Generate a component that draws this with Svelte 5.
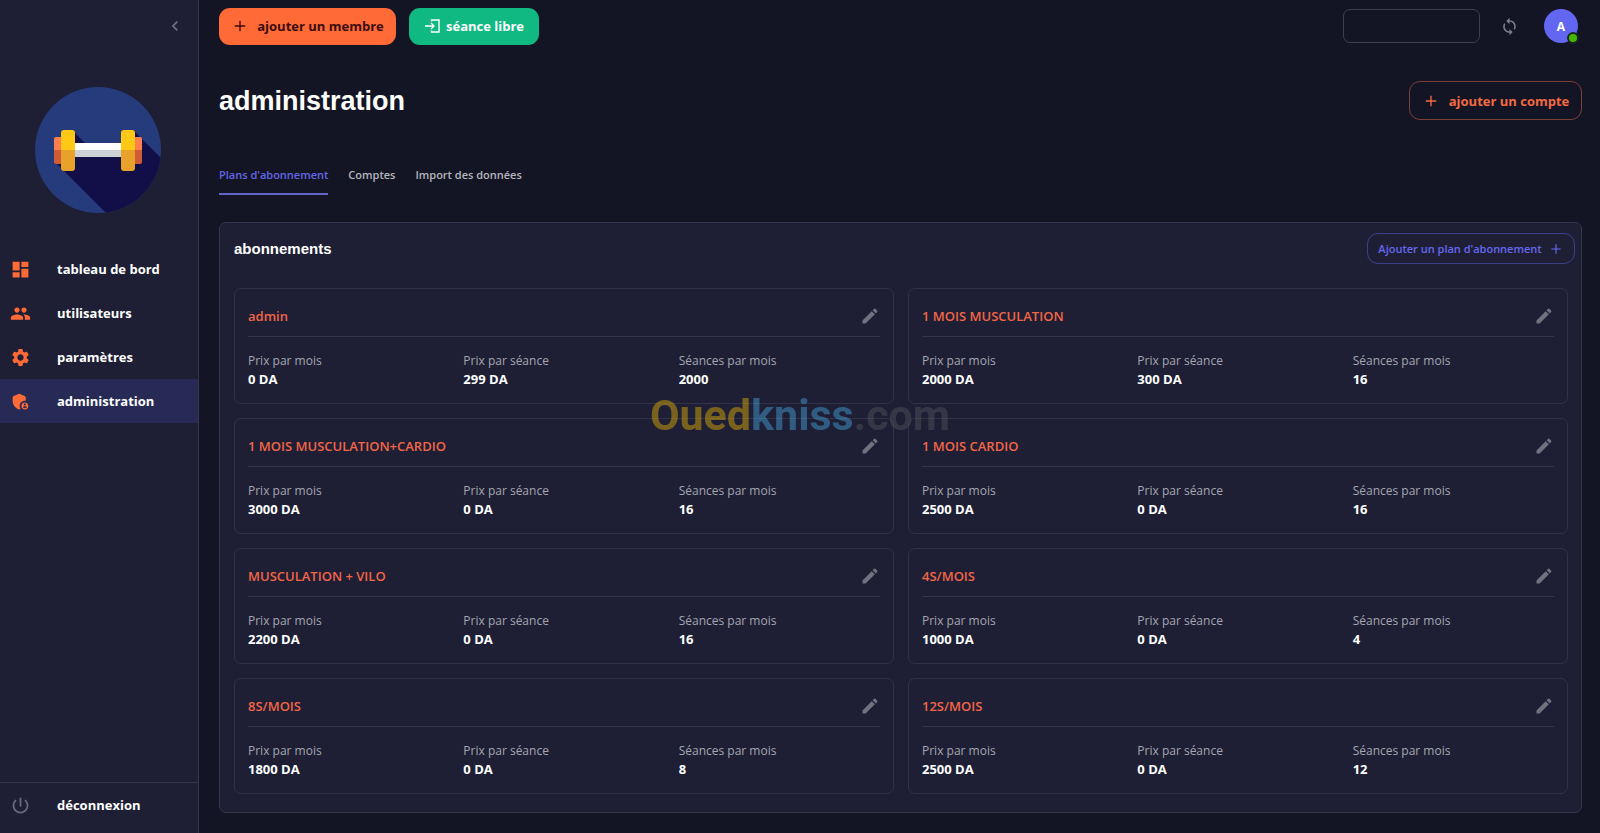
<script>
  const navItems = [
    { label: 'tableau de bord', icon: 'dashboard' },
    { label: 'utilisateurs', icon: 'group' },
    { label: 'paramètres', icon: 'settings' },
    { label: 'administration', icon: 'admin' }
  ];

  const tabs = ["Plans d'abonnement", 'Comptes', 'Import des données'];

  const plans = [
    { name: 'admin', month: 0, session: 299, count: 2000 },
    { name: '1 MOIS MUSCULATION', month: 2000, session: 300, count: 16 },
    { name: '1 MOIS MUSCULATION+CARDIO', month: 3000, session: 0, count: 16 },
    { name: '1 MOIS CARDIO', month: 2500, session: 0, count: 16 },
    { name: 'MUSCULATION + VILO', month: 2200, session: 0, count: 16 },
    { name: '4S/MOIS', month: 1000, session: 0, count: 4 },
    { name: '8S/MOIS', month: 1800, session: 0, count: 8 },
    { name: '12S/MOIS', month: 2500, session: 0, count: 12 }
  ];

  const icons = {
    dashboard: 'M3 13h8V3H3v10zm0 8h8v-6H3v6zm10 0h8V11h-8v10zm0-18v6h8V3h-8z',
    group:
      'M16 11c1.66 0 2.99-1.34 2.99-3S17.66 5 16 5s-3 1.34-3 3 1.34 3 3 3zm-8 0c1.66 0 2.99-1.34 2.99-3S9.66 5 8 5 5 6.34 5 8s1.34 3 3 3zm0 2c-2.33 0-7 1.17-7 3.5V19h14v-2.5c0-2.33-4.67-3.5-7-3.5zm8 0c-.29 0-.62.02-.97.05 1.16.84 1.97 1.97 1.97 3.45V19h6v-2.5c0-2.33-4.67-3.5-7-3.5z',
    settings:
      'M19.14 12.94c.04-.3.06-.61.06-.94 0-.32-.02-.64-.07-.94l2.03-1.58c.18-.14.23-.41.12-.61l-1.92-3.32c-.12-.22-.37-.29-.59-.22l-2.39.96c-.5-.38-1.03-.7-1.62-.94l-.36-2.54c-.04-.24-.24-.41-.48-.41h-3.84c-.24 0-.43.17-.47.41l-.36 2.54c-.59.24-1.13.57-1.62.94l-2.39-.96c-.22-.08-.47 0-.59.22L2.74 8.87c-.12.21-.08.47.12.61l2.03 1.58c-.05.3-.09.63-.09.94s.02.64.07.94l-2.03 1.58c-.18.14-.23.41-.12.61l1.92 3.32c.12.22.37.29.59.22l2.39-.96c.5.38 1.03.7 1.62.94l.36 2.54c.05.24.24.41.48.41h3.84c.24 0 .44-.17.47-.41l.36-2.54c.59-.24 1.13-.56 1.62-.94l2.39.96c.22.08.47 0 .59-.22l1.92-3.32c.12-.22.07-.47-.12-.61l-2.01-1.58zM12 15.6c-1.98 0-3.6-1.62-3.6-3.6s1.62-3.6 3.6-3.6 3.6 1.62 3.6 3.6-1.62 3.6-3.6 3.6z',
    admin:
      'M17 11c.34 0 .67.04 1 .09V7.58c0-.8-.47-1.52-1.2-1.83l-5.5-2.4c-.51-.22-1.09-.22-1.6 0l-5.5 2.4C3.47 6.06 3 6.78 3 7.58v3.6c0 4.54 3.2 8.79 7.5 9.82.55-.13 1.08-.32 1.6-.55-.69-.98-1.1-2.17-1.1-3.45 0-3.31 2.69-6 6-6zM17 13c-2.21 0-4 1.79-4 4s1.79 4 4 4 4-1.79 4-4-1.79-4-4-4zm0 1.38c.62 0 1.12.51 1.12 1.12s-.51 1.12-1.12 1.12-1.12-.51-1.12-1.12.5-1.12 1.12-1.12zm0 5.37c-.93 0-1.74-.46-2.24-1.17.05-.72 1.51-1.08 2.24-1.08s2.19.36 2.24 1.08c-.5.71-1.31 1.17-2.24 1.17z',
    power:
      'M13 3h-2v10h2V3zm4.83 2.17-1.42 1.42C17.99 7.86 19 9.81 19 12c0 3.87-3.13 7-7 7s-7-3.13-7-7c0-2.19 1.01-4.14 2.58-5.42L6.17 5.17C4.23 6.82 3 9.26 3 12c0 4.97 4.03 9 9 9s9-4.03 9-9c0-2.74-1.23-5.18-3.17-6.83z',
    edit: 'M3 17.25V21h3.75L17.81 9.94l-3.75-3.75L3 17.25zM20.71 7.04c.39-.39.39-1.02 0-1.41l-2.34-2.34c-.39-.39-1.02-.39-1.41 0l-1.83 1.83 3.75 3.75 1.83-1.83z',
    sync: 'M12 4V1L8 5l4 4V6c3.31 0 6 2.69 6 6 0 1.01-.25 1.97-.7 2.8l1.46 1.46C19.54 15.03 20 13.57 20 12c0-4.42-3.58-8-8-8zm0 14c-3.31 0-6-2.69-6-6 0-1.01.25-1.97.7-2.8L5.24 7.74C4.46 8.97 4 10.43 4 12c0 4.42 3.58 8 8 8v3l4-4-4-4v3z',
    chevron: 'M15.41 7.41 14 6l-6 6 6 6 1.41-1.41L10.83 12z',
    plus: 'M11.1 5h1.8v6.1H19v1.8h-6.1V19h-1.8v-6.1H5v-1.8h6.1z'
  };

  let activePage = $state('administration');
  let activeTab = $state(tabs[0]);
  let search = $state('');
</script>

{#snippet icon(name, size)}
  <svg width={size} height={size} viewBox="0 0 24 24" fill="currentColor" aria-hidden="true">
    <path d={icons[name]} />
  </svg>
{/snippet}

<div class="layout">
  <aside class="sidebar">
    <button class="collapse" aria-label="Réduire le menu">{@render icon('chevron', 20)}</button>

    <svg class="logo" viewBox="0 0 126 126" role="img" aria-label="Haltère">
      <defs>
        <clipPath id="disc"><circle cx="63" cy="63" r="63" /></clipPath>
      </defs>
      <g clip-path="url(#disc)">
        <rect width="126" height="126" fill="#263b7b" />
        <path d="M40 46 L50 56 H88 L99 44 L140 85 V140 H85 L22 77 Z" fill="#120e48" />
      </g>
      <rect x="38" y="56" width="50" height="7" fill="#fff" />
      <rect x="38" y="63" width="50" height="7" fill="#ced1d6" />
      <path d="M21 50h6v13h-8V52a2 2 0 0 1 2-2zM99 50h6a2 2 0 0 1 2 2v11h-8z" fill="#ff7f4f" />
      <path d="M19 63h8v14h-6a2 2 0 0 1-2-2zM99 63h8v12a2 2 0 0 1-2 2h-6z" fill="#d05c35" />
      <path d="M29 43h8a3 3 0 0 1 3 3v17H26V46a3 3 0 0 1 3-3zM89 43h8a3 3 0 0 1 3 3v17H86V46a3 3 0 0 1 3-3z" fill="#ffc814" />
      <path d="M26 63h14v18a3 3 0 0 1-3 3h-8a3 3 0 0 1-3-3zM86 63h14v18a3 3 0 0 1-3 3h-8a3 3 0 0 1-3-3z" fill="#e8a22b" />
    </svg>

    <nav>
      {#each navItems as item}
        <a
          href="#{item.icon}"
          class="nav-item"
          class:active={activePage === item.label}
          onclick={() => (activePage = item.label)}
        >
          {@render icon(item.icon, 21)}
          <span>{item.label}</span>
        </a>
      {/each}
    </nav>

    <button class="nav-item logout">
      {@render icon('power', 21)}
      <span>déconnexion</span>
    </button>
  </aside>

  <main>
    <header class="topbar">
      <button class="btn btn-member">{@render icon('plus', 18)}<span>ajouter un membre</span></button>
      <button class="btn btn-session">
        <svg width="16" height="16" viewBox="0 0 16 16" fill="none" stroke="currentColor" stroke-width="1.4" aria-hidden="true">
          <path d="M1 8h9M7 5l3 3-3 3M7.500 3.500V2H15v12H7.500v-1.500" />
        </svg>
        <span>séance libre</span>
      </button>
      <input class="search" type="text" aria-label="Rechercher" bind:value={search} />
      <button class="sync" aria-label="Synchroniser">{@render icon('sync', 19)}</button>
      <button class="avatar" aria-label="Compte">A<i class="status"></i></button>
    </header>

    <div class="page-head">
      <h1>administration</h1>
      <button class="btn btn-account">{@render icon('plus', 18)}<span>ajouter un compte</span></button>
    </div>

    <div class="tabs" role="tablist">
      {#each tabs as tab}
        <button
          role="tab"
          class="tab"
          class:selected={activeTab === tab}
          aria-selected={activeTab === tab}
          onclick={() => (activeTab = tab)}>{tab}</button
        >
      {/each}
    </div>

    <section class="panel">
      <div class="panel-head">
        <h2>abonnements</h2>
        <button class="btn btn-plan"><span>Ajouter un plan d'abonnement</span>{@render icon('plus', 16)}</button>
      </div>

      <div class="plans">
        {#each plans as plan}
          <article class="plan">
            <div class="plan-head">
              <h3>{plan.name}</h3>
              <button class="edit" aria-label="Modifier {plan.name}">{@render icon('edit', 20)}</button>
            </div>
            <dl>
              <div>
                <dt>Prix par mois</dt>
                <dd>{plan.month} DA</dd>
              </div>
              <div>
                <dt>Prix par séance</dt>
                <dd>{plan.session} DA</dd>
              </div>
              <div>
                <dt>Séances par mois</dt>
                <dd>{plan.count}</dd>
              </div>
            </dl>
          </article>
        {/each}
      </div>
    </section>
  </main>

  <div class="watermark" aria-hidden="true">
    <span class="oued">Oued</span><span class="kniss">kniss</span><span class="com">.com</span>
  </div>
</div>

<style>
  :global(body) {
    background: #141524;
  }

  .layout {
    --orange: #ff6a37;
    --indigo: #6366f1;
    --surface: #1e1f35;
    --line: #34364b;
    display: flex;
    min-height: 100vh;
    color: #fff;
    font-family: 'Open Sans', 'Noto Sans', sans-serif;
    font-size: 13px;
  }

  .layout *,
  .layout {
    box-sizing: border-box;
  }

  button {
    font: inherit;
    color: inherit;
    background: none;
    border: none;
    padding: 0;
    cursor: pointer;
  }

  svg {
    display: block;
    flex-shrink: 0;
  }

  h1,
  h2,
  h3,
  dl,
  dd {
    margin: 0;
  }

  .sidebar {
    display: flex;
    flex-direction: column;
    flex: 0 0 199px;
    background: var(--surface);
    border-right: 1px solid var(--line);
  }

  .collapse {
    align-self: flex-end;
    margin: 16px 13px 51px 0;
    color: #6f7180;
  }

  .logo {
    width: 126px;
    margin: 0 0 34px 35px;
  }

  .nav-item {
    display: flex;
    align-items: center;
    gap: 26px;
    width: 100%;
    height: 44px;
    padding-left: 10px;
    font-weight: 700;
    color: #fff;
    text-decoration: none;
  }

  .nav-item svg {
    color: var(--orange);
  }

  .nav-item.active {
    background: #272a55;
  }

  .logout {
    height: 51px;
    margin-top: auto;
    padding-bottom: 6px;
    border-top: 1px solid var(--line);
  }

  .logout svg {
    color: #6a6c7c;
  }

  main {
    flex: 1;
    min-width: 0;
    padding: 7px 18px 19px 20px;
  }

  .topbar {
    display: flex;
    align-items: center;
    height: 38px;
  }

  .btn {
    display: flex;
    align-items: center;
    justify-content: center;
    border-radius: 11px;
    font-weight: 700;
    white-space: nowrap;
  }

  .btn-member {
    width: 177px;
    height: 37px;
    gap: 8px;
    margin-right: 13px;
    background: var(--orange);
    color: #3b0d0d;
  }

  .btn-session {
    width: 130px;
    height: 37px;
    gap: 6px;
    background: #10b981;
  }

  .search {
    width: 137px;
    height: 34px;
    margin-left: auto;
    padding: 0 12px;
    background: transparent;
    border: 1px solid #3d3f50;
    border-radius: 7px;
    color: #fff;
    font: inherit;
  }

  .sync {
    margin: 0 25px 0 20px;
    color: #7d7e8a;
  }

  .avatar {
    position: relative;
    width: 34px;
    height: 34px;
    margin-right: 4px;
    border-radius: 50%;
    background: var(--indigo);
    font-size: 12px;
    font-weight: 700;
  }

  .status {
    position: absolute;
    right: -1px;
    bottom: -1px;
    width: 12px;
    height: 12px;
    border: 2px solid #16291f;
    border-radius: 50%;
    background: #44b700;
  }

  .page-head {
    display: flex;
    align-items: center;
    justify-content: space-between;
    margin-top: 36px;
  }

  h1 {
    font: 700 27px/32px 'Liberation Sans', Arial, sans-serif;
  }

  .btn-account {
    width: 173px;
    height: 39px;
    gap: 9px;
    border: 1px solid #7c4038;
    color: #f26a41;
  }

  .tabs {
    display: flex;
    gap: 20px;
    margin-top: 38px;
  }

  .tab {
    height: 37px;
    padding-bottom: 2px;
    border-bottom: 2px solid transparent;
    font-size: 11px;
    font-weight: 600;
    color: #b4b5bc;
  }

  .tab.selected {
    border-color: #6366c8;
    color: #6365e6;
  }

  .panel {
    margin-top: 27px;
    padding: 10px 13px 18px 14px;
    background: var(--surface);
    border: 1px solid var(--line);
    border-radius: 7px;
  }

  .panel-head {
    display: flex;
    align-items: center;
    justify-content: space-between;
    margin: 0 -7px 24px 0;
  }

  h2 {
    font: 700 15px/20px 'Liberation Sans', Arial, sans-serif;
  }

  .btn-plan {
    width: 208px;
    height: 31px;
    gap: 6px;
    border: 1px solid #3d3f86;
    color: #6668f0;
    font-size: 11px;
    font-weight: 600;
  }

  .plans {
    display: grid;
    grid-template-columns: 1fr 1fr;
    gap: 14px;
  }

  .plan {
    padding: 13px 13px 14px;
    border: 1px solid #30324a;
    border-radius: 7px;
  }

  .plan-head {
    display: flex;
    align-items: center;
    justify-content: space-between;
    height: 35px;
    padding-bottom: 7px;
    border-bottom: 1px solid var(--line);
  }

  h3 {
    font-size: 13px;
    font-weight: 600;
    color: #f26545;
  }

  .edit {
    color: #70727f;
  }

  dl {
    display: grid;
    grid-template-columns: repeat(3, 1fr);
    gap: 14px;
    padding-top: 14px;
  }

  dt {
    font-size: 12px;
    line-height: 19px;
    color: #a5a6b0;
  }

  dd {
    font-weight: 700;
    line-height: 19px;
  }

  /* sits over the whole page, clicks pass through */
  .watermark {
    position: fixed;
    inset: 0;
    display: flex;
    align-items: center;
    justify-content: center;
    padding-bottom: 2px;
    font: 700 43px/1 Roboto, sans-serif;
    pointer-events: none;
    opacity: 0.45;
  }

  .oued {
    color: #e8b400;
  }

  .kniss {
    color: #4aa6e0;
  }

  .com {
    color: #55565c;
  }
</style>
